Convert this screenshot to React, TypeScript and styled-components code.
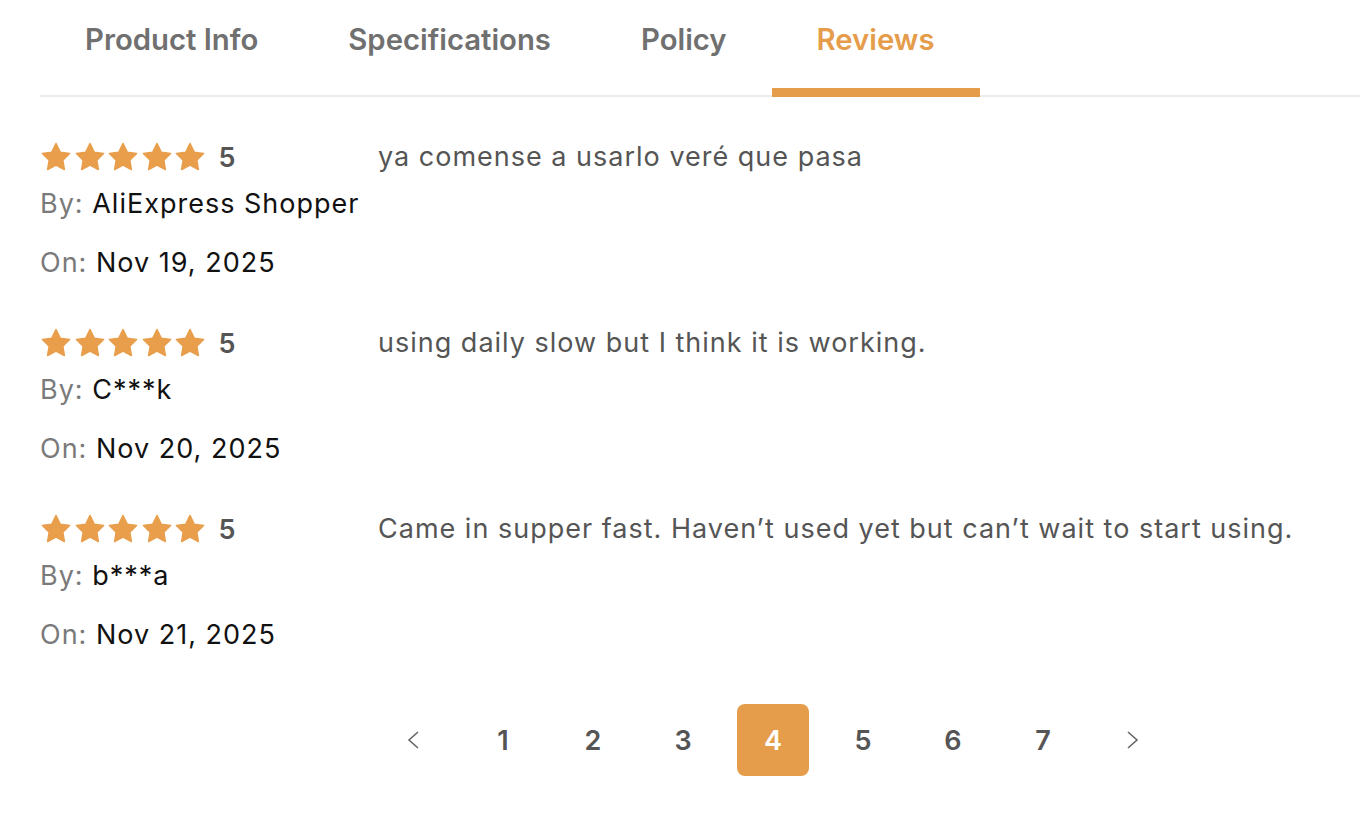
import React from "react";
import styled, { createGlobalStyle } from "styled-components";

const GlobalStyle = createGlobalStyle`
  body {
    margin: 0;
    background: #fff;
    font-family: Inter, "Liberation Sans", sans-serif;
  }
`;

const Page = styled.div`
  padding-left: 40px;
  width: 1320px;
`;

const TabList = styled.div`
  display: flex;
  border-bottom: 2px solid #ebebeb;
`;

const Tab = styled.div<{ $active?: boolean }>`
  padding: 22px 45px 0;
  height: 66px;
  margin-bottom: -2px;
  font-size: 29.3px;
  line-height: 36px;
  font-weight: 600;
  color: ${(p) => (p.$active ? "#e59d4b" : "#707070")};
  border-bottom: 9px solid ${(p) => (p.$active ? "#e59d4b" : "transparent")};
  cursor: pointer;
`;

const ReviewList = styled.div`
  display: flex;
  flex-direction: column;
  gap: 46px;
  padding-top: 42px;
`;

const Review = styled.div`
  display: grid;
  grid-template-columns: 338px 1fr;
`;

const Meta = styled.div`
  display: flex;
  flex-direction: column;
`;

const RatingRow = styled.div`
  display: flex;
  align-items: center;
  height: 36px;
  gap: 12px;
`;

const Stars = styled.div`
  display: flex;
  gap: 1.6px;
`;

const Score = styled.span`
  font-size: 27px;
  font-weight: 600;
  color: #555;
`;

const MetaLine = styled.div<{ $gap: number }>`
  margin-top: ${(p) => p.$gap}px;
  font-size: 27px;
  line-height: 32px;
  letter-spacing: 1px;
  color: #111;
  white-space: nowrap;
`;

const Label = styled.span`
  color: #7a7a7a;
`;

const Body = styled.p`
  margin: 0;
  height: 36px;
  font-size: 27px;
  line-height: 36px;
  letter-spacing: 1px;
  color: #555;
  white-space: nowrap;
`;

const Pager = styled.div`
  display: flex;
  gap: 18px;
  padding: 53px 0 0 337px;
`;

const PageButton = styled.div<{ $active?: boolean }>`
  width: 72px;
  height: 72px;
  display: flex;
  align-items: center;
  justify-content: center;
  border-radius: 8px;
  font-size: 27px;
  font-weight: 600;
  background: ${(p) => (p.$active ? "#e59d4b" : "transparent")};
  color: ${(p) => (p.$active ? "#fff" : "#555")};
  cursor: pointer;
`;

const Star = () => (
  <svg width="32" height="30" viewBox="0 0 24 23" aria-hidden="true">
    <path
      fill="#e89e4b"
      stroke="#e89e4b"
      strokeWidth="1.2"
      strokeLinejoin="round"
      d="M12 1.2l3.2 6.6 7.2 1-5.2 5.1 1.2 7.2L12 17.7l-6.4 3.4 1.2-7.2L1.6 8.8l7.2-1z"
    />
  </svg>
);

const Chevron = ({ dir }: { dir: "left" | "right" }) => (
  <svg width="16" height="20" viewBox="0 0 16 20" aria-hidden="true">
    <polyline
      points={dir === "left" ? "13,2 4,10 13,18" : "3,2 12,10 3,18"}
      fill="none"
      stroke="#666"
      strokeWidth="1.6"
    />
  </svg>
);

const reviews = [
  { by: "AliExpress Shopper", on: "Nov 19, 2025", text: "ya comense a usarlo veré que pasa" },
  { by: "C***k", on: "Nov 20, 2025", text: "using daily slow but I think it is working." },
  {
    by: "b***a",
    on: "Nov 21, 2025",
    text: "Came in supper fast. Haven’t used yet but can’t wait to start using.",
  },
];

const tabs = ["Product Info", "Specifications", "Policy", "Reviews"];

export default function App() {
  return (
    <>
      <GlobalStyle />
      <Page>
        <TabList>
          {tabs.map((t) => (
            <Tab key={t} $active={t === "Reviews"}>
              {t}
            </Tab>
          ))}
        </TabList>
        <ReviewList>
          {reviews.map((r) => (
            <Review key={r.on}>
              <Meta>
                <RatingRow>
                  <Stars>
                    {[0, 1, 2, 3, 4].map((i) => (
                      <Star key={i} />
                    ))}
                  </Stars>
                  <Score>5</Score>
                </RatingRow>
                <MetaLine $gap={13}>
                  <Label>By:</Label> {r.by}
                </MetaLine>
                <MetaLine $gap={27}>
                  <Label>On:</Label> {r.on}
                </MetaLine>
              </Meta>
              <Body>{r.text}</Body>
            </Review>
          ))}
        </ReviewList>
        <Pager>
          <PageButton>
            <Chevron dir="left" />
          </PageButton>
          {[1, 2, 3, 4, 5, 6, 7].map((n) => (
            <PageButton key={n} $active={n === 4}>
              {n}
            </PageButton>
          ))}
          <PageButton>
            <Chevron dir="right" />
          </PageButton>
        </Pager>
      </Page>
    </>
  );
}
